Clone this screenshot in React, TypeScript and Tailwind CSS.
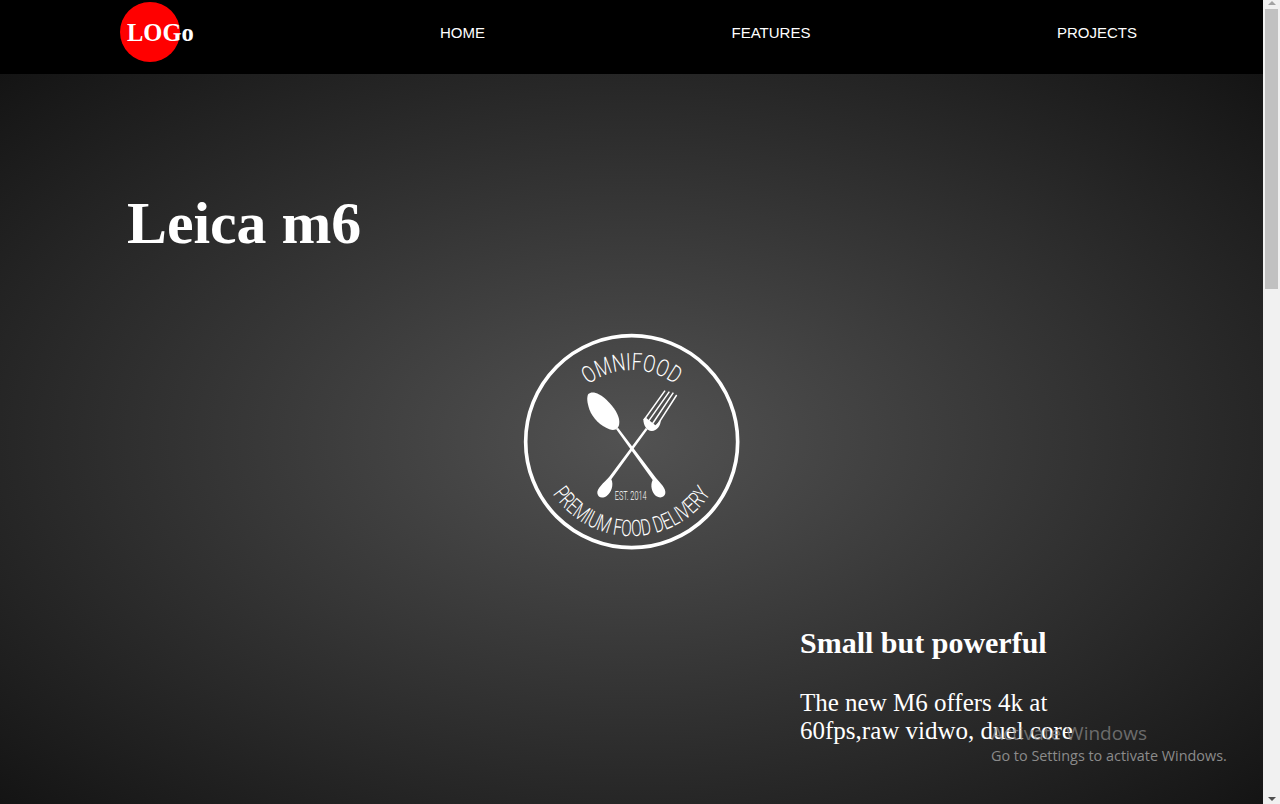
function Emblem() {
  return (
    <svg viewBox="0 0 720 720" className="h-[240px] w-[240px]">
      <defs>
        <path id="topArc" d="M 213 213 A 215 215 0 0 1 517 213" />
        <path id="bottomArc" d="M 120 508 A 284 284 0 0 0 610 508" />
      </defs>
      <circle cx="365" cy="365" r="318" fill="none" stroke="white" strokeWidth="11" />
      <text fill="white" fontFamily="Roboto, sans-serif" fontWeight="300" fontSize="72">
        <textPath href="#topArc" startOffset="50%" textAnchor="middle" textLength="280" lengthAdjust="spacingAndGlyphs">
          OMNIFOOD
        </textPath>
      </text>
      <text fill="white" fontFamily="Roboto, sans-serif" fontWeight="300" fontSize="68">
        <textPath href="#bottomArc" startOffset="50%" textAnchor="middle" textLength="560" lengthAdjust="spacingAndGlyphs">
          PREMIUM FOOD DELIVERY
        </textPath>
      </text>
      <text x="362" y="541" fill="white" textAnchor="middle" fontFamily="Roboto, sans-serif" fontWeight="300" fontSize="36" textLength="95" lengthAdjust="spacingAndGlyphs">
        EST. 2014
      </text>
      {/* spoon */}
      <path d="M235 222 C245 212 268 218 290 240 C312 262 328 285 328 306 C328 326 316 334 298 328 C272 318 248 296 238 268 C232 250 229 232 235 222 Z" fill="white" />
      <path d="M318 327 L324 323 L438 474 C452 490 468 505 466 520 C464 532 450 536 438 528 C425 518 420 495 428 480 Z" fill="white" />
      {/* fork */}
      <path d="M413 328 L407 324 L298 470 C282 488 260 505 262 520 C264 534 278 536 290 528 C304 518 312 495 304 478 Z" fill="white" />
      <path d="M400 298 C400 318 412 334 426 333 C440 332 452 318 452 302 L436 316 L406 292 Z" fill="white" />
      <path d="M402 300 L465 212 M413 307 L478 215 M425 315 L490 218 M437 323 L500 225" stroke="white" strokeWidth="4.5" />
    </svg>
  );
}

function Scrollbar() {
  return (
    <div className="flex w-[17px] shrink-0 flex-col items-center bg-[#f1f1f1]">
      <div className="mt-[1px] h-0 w-0 border-x-[4px] border-b-[4px] border-x-transparent border-b-[#a3a3a3]" />
      <div className="mt-[4px] h-[280px] w-[13px] bg-[#c1c1c1]" />
      <div className="mt-auto mb-[3px] h-0 w-0 border-x-[4px] border-t-[4px] border-x-transparent border-t-[#505050]" />
    </div>
  );
}

export default function App() {
  return (
    <div className="relative flex h-[804px] overflow-hidden font-['Liberation_Serif',serif] text-white">
      <div className="w-[1263px] shrink-0">
        <header className="flex h-[74px] bg-black pl-[120px]">
          <div className="mt-[2px] h-[60px] w-[60px] shrink-0 rounded-full bg-[#ff0000] pl-[7px] text-[24.5px] leading-[62px] font-bold whitespace-nowrap">
            LOGo
          </div>
          <nav className="ml-[260px] flex gap-[246.5px] pt-[23.5px] font-['Liberation_Sans',sans-serif] text-[15px] leading-[18px]">
            <a>HOME</a>
            <a>FEATURES</a>
            <a>PROJECTS</a>
          </nav>
        </header>
        <section className="h-[730px] bg-[radial-gradient(ellipse_at_center,#525252_0%,#141414_100%)]">
          <h1 className="ml-[127px] pt-[115px] text-[59.8px] leading-[69px] font-bold">Leica m6</h1>
          <div className="mt-[62px] flex justify-center pr-[3px]">
            <Emblem />
          </div>
          <div className="mt-[67px] ml-[800px] w-[300px]">
            <h2 className="text-[30px] leading-[32px] font-bold">Small but powerful</h2>
            <p className="mt-[30px] text-[25px] leading-[28px]">The new M6 offers 4k at 60fps,raw vidwo, duel core</p>
          </div>
        </section>
      </div>
      <Scrollbar />
      <div className="absolute top-[720px] left-[991px] font-['Open_Sans',sans-serif] text-[#8b8b8b]">
        <div className="text-[19px] leading-[27px] opacity-70">Activate Windows</div>
        <div className="text-[14.4px] leading-[18px]">Go to Settings to activate Windows.</div>
      </div>
    </div>
  );
}
